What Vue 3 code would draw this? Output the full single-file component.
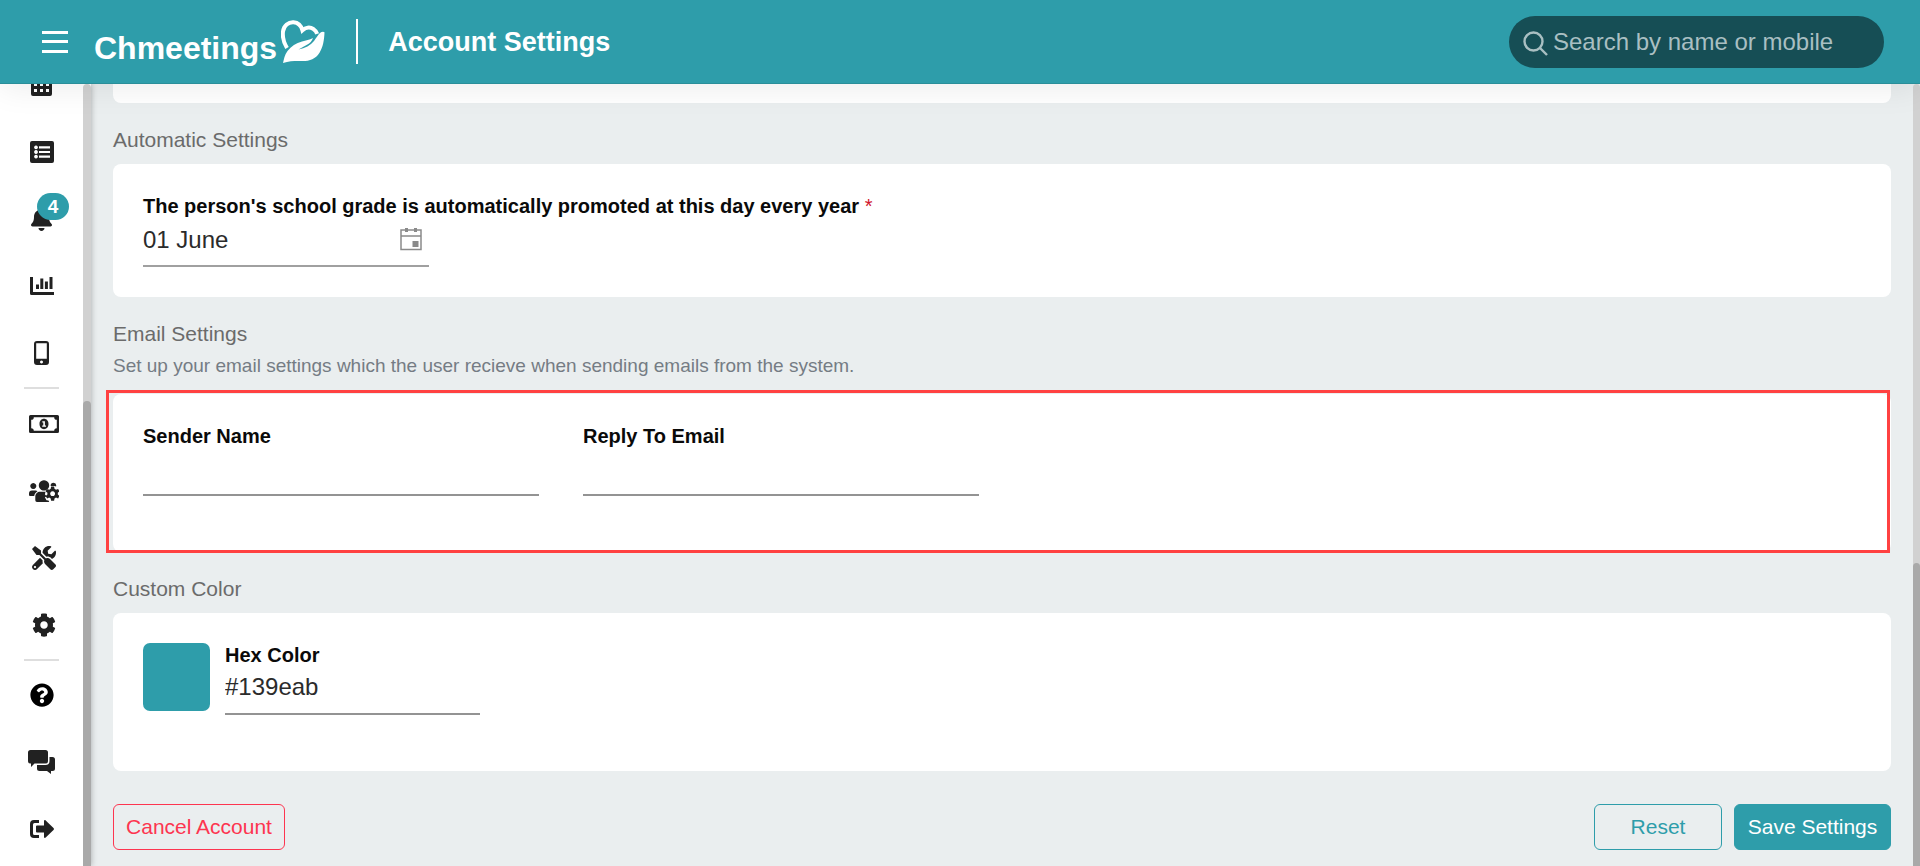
<script setup>
import { ref } from 'vue'

const search = ref('')
const promotionDay = ref('01 June')
const senderName = ref('')
const replyTo = ref('')
const hexColor = ref('#139eab')

const groups = [
  {
    name: 'main',
    items: [
      { label: 'Calendar', w: 21, h: 24, box: '0 0 21 24', d: 'M3 0h15a3 3 0 0 1 3 3v18a2 2 0 0 1-2 2H2a2 2 0 0 1-2-2V3a3 3 0 0 1 3-3zM3 10v3h3v-3zM9 10v3h3v-3zM15 10v3h3v-3zM3 16v3h3v-3zM9 16v3h3v-3zM15 16v3h3v-3z' },
      { label: 'Lists', w: 24, h: 22, box: '0 0 24 22', d: 'M2 0h20a2 2 0 0 1 2 2v18a2 2 0 0 1-2 2H2a2 2 0 0 1-2-2V2a2 2 0 0 1 2-2zM6 4.500a1.900 1.900 0 1 0 .01 0zM6 9.100a1.900 1.900 0 1 0 .01 0zM6 13.700a1.900 1.900 0 1 0 .01 0zM9 5.200v2.200h11V5.200zM9 9.900v2.200h11V9.900zM9 14.600v2.200h11v-2.200z' },
      { label: 'Notifications', badge: 4, w: 21, h: 24, box: '0 0 448 512', d: 'M224 512c35.300 0 63.900-28.600 63.900-64H160.100c0 35.400 28.600 64 63.900 64zm215.400-149.700c-19.300-20.800-55.500-52-55.500-154.300 0-77.700-54.500-139.900-127.900-155.200V32c0-17.700-14.300-32-32-32s-32 14.300-32 32v20.800C118.600 68.100 64.100 130.300 64.100 208c0 102.300-36.200 133.500-55.500 154.300-6 6.400-8.700 14.200-8.600 21.700.1 16.400 13 32 32.100 32h383.800c19.100 0 32-15.600 32.100-32 .1-7.600-2.600-15.300-8.600-21.700z' },
      { label: 'Reports', w: 24, h: 18, box: '0 0 24 18', d: 'M0 0h3v15h21v3H1.500A1.500 1.500 0 0 1 0 16.500zM6 7.500h3V12H6zM10.300 1.500h3V12h-3zM14.900 4.500h3V12h-3zM19.500 0h3v12h-3z' },
      { label: 'Mobile app', w: 15, h: 24, box: '0 0 15 24', d: 'M3 0h9a3 3 0 0 1 3 3v18a3 3 0 0 1-3 3H3a3 3 0 0 1-3-3V3a3 3 0 0 1 3-3zM2.200 2.200v15.600h10.600V2.200zM7.500 19.400a1.500 1.500 0 1 0 .01 0z' },
    ],
  },
  {
    name: 'manage',
    items: [
      { label: 'Contributions', w: 30, h: 18, box: '0 0 30 18', d: 'M1.500 0h27A1.500 1.500 0 0 1 30 1.500v15a1.500 1.500 0 0 1-1.500 1.500h-27A1.500 1.500 0 0 1 0 16.500v-15A1.500 1.500 0 0 1 1.500 0zM4.800 2.200A2.600 2.600 0 0 1 2.200 4.800v8.400a2.600 2.600 0 0 1 2.600 2.600h20.400a2.600 2.600 0 0 1 2.600-2.600V4.800a2.600 2.600 0 0 1-2.600-2.600zM15 3.800c2.600 0 4.500 2.200 4.500 5.200s-1.900 5.200-4.500 5.200-4.500-2.200-4.500-5.200S12.400 3.800 15 3.800zM13.300 6.200v1.300h1v3h-1.100v1.300h3.800v-1.300h-1.100V6.200z' },
      { label: 'User management', w: 30, h: 22, box: '0 0 30 22', d: 'M4.300 3a3 3 0 1 1-.01 0zM15 .2a5.200 5.200 0 1 1-.01 0zM24.500 2.800a3 3 0 0 1 2.600 3.600l-1.600-.4h-3.700l-.2-.4a3 3 0 0 1 2.900-2.800zM3 10.500h3.600c.7 0 1.300.3 1.900.7-1.700 1.100-3 2.600-3.300 4.700H1a1 1 0 0 1-1-1v-1.400a3 3 0 0 1 3-3zM11 11.800h5.500l-.6 2.600 1.500 1.400-1.500 1.500 1.600 3 2 .2.700 1.500H8A1.700 1.700 0 0 1 6.300 20.300v-3.500c0-3 2.200-5 4.700-5zM22.100 6.600h3l.4 2.200 1.500.9 2.100-.8 1.400 2.500-1.700 1.400v1.700l1.700 1.500-1.400 2.400-2.100-.8-1.500.9-.4 2.300h-3l-.4-2.300-1.500-.9-2.100.8-1.400-2.400 1.700-1.500v-1.700l-1.700-1.400 1.400-2.500 2.100.8 1.500-.9zM23.600 11.300a2.400 2.400 0 1 0 .01 0z' },
      { label: 'Tools', w: 24, h: 24, box: '0 0 512 512', d: 'M501.100 395.700L384 278.600c-23.100-23.100-57.600-27.600-85.400-13.900L192 158.100V96L64 0 0 64l96 128h62.100l106.600 106.600c-13.600 27.800-9.200 62.300 13.900 85.400l117.100 117.100c14.600 14.600 38.200 14.600 52.700 0l52.700-52.700c14.500-14.600 14.500-38.200 0-52.700zM331.700 225c28.300 0 54.900 11 74.900 31l19.400 19.400c15.800-6.900 30.800-16.500 43.800-29.500 37.100-37.100 49.700-89.300 37.900-136.700-2.200-9-13.500-12.100-20.100-5.500l-74.400 74.400-67.900-11.300L334 98.900l74.400-74.400c6.600-6.600 3.400-17.900-5.700-20.200-47.400-11.700-99.600.9-136.600 37.900-28.500 28.500-41.900 66.100-41.200 103.600l82.100 82.100c8.100-1.900 16.500-2.900 24.700-2.900zm-103.900 82l-56.700-56.700L18.700 402.800c-25 25-25 65.500 0 90.500s65.500 25 90.500 0l123.600-123.600c-7.600-19.900-9.900-41.600-5-62.700zM64 472c-13.200 0-24-10.800-24-24 0-13.300 10.700-24 24-24s24 10.700 24 24c0 13.200-10.700 24-24 24z' },
      { label: 'Settings', w: 24, h: 24, box: '0 0 512 512', d: 'M487.400 315.700l-42.600-24.600c4.300-23.200 4.300-47 0-70.200l42.600-24.600c4.900-2.800 7.100-8.600 5.500-14-11.100-35.600-30-67.800-54.700-94.600-3.800-4.100-10-5.100-14.800-2.300L380.800 110c-17.900-15.400-38.500-27.300-60.800-35.100V25.800c0-5.600-3.900-10.500-9.400-11.700-36.700-8.200-74.300-7.800-109.200 0-5.500 1.200-9.400 6.100-9.400 11.700V75c-22.200 7.900-42.800 19.800-60.800 35.100L88.700 85.500c-4.900-2.800-11-1.900-14.800 2.300-24.700 26.700-43.600 58.900-54.700 94.600-1.700 5.400.6 11.200 5.500 14L67.300 221c-4.300 23.200-4.300 47 0 70.200l-42.600 24.600c-4.900 2.800-7.100 8.600-5.500 14 11.100 35.600 30 67.800 54.700 94.600 3.800 4.100 10 5.100 14.800 2.300l42.600-24.600c17.900 15.400 38.500 27.300 60.800 35.100v49.200c0 5.600 3.900 10.500 9.400 11.700 36.700 8.200 74.300 7.800 109.200 0 5.500-1.200 9.400-6.100 9.400-11.700v-49.200c22.200-7.900 42.800-19.800 60.800-35.100l42.600 24.600c4.900 2.800 11 1.900 14.800-2.300 24.700-26.700 43.600-58.900 54.700-94.600 1.500-5.500-.7-11.300-5.600-14.100zM256 336c-44.100 0-80-35.900-80-80s35.900-80 80-80 80 35.900 80 80-35.900 80-80 80z' },
    ],
  },
  {
    name: 'support',
    items: [
      { label: 'Help', dark: true, w: 24, h: 24, box: '0 0 512 512', d: 'M504 256c0 137-111 248-248 248S8 393 8 256C8 119.100 119 8 256 8s248 111.100 248 248zM262.700 90c-54.500 0-89.300 23-116.500 63.800-3.500 5.300-2.400 12.400 2.700 16.300l34.700 26.300c5.200 3.900 12.600 3 16.700-2.100 17.900-22.700 30.100-35.800 57.300-35.800 20.400 0 45.700 13.100 45.700 33 0 15-12.400 22.700-32.500 34C247.100 238.500 216 254.900 216 296v4c0 6.600 5.400 12 12 12h56c6.600 0 12-5.400 12-12v-1.300c0-28.500 83.200-29.600 83.200-106.700 0-58-60.200-102-116.500-102zM256 338c-25.400 0-46 20.600-46 46 0 25.400 20.600 46 46 46s46-20.600 46-46c0-25.400-20.600-46-46-46z' },
      { label: 'Chat', w: 27, h: 24, box: '0 0 27 24', d: 'M2.500 0h15A2.500 2.500 0 0 1 20 2.500v8.500a2.500 2.500 0 0 1-2.500 2.500H6.500L3 17v-3.500h-.5A2.500 2.500 0 0 1 0 11V2.500A2.500 2.500 0 0 1 2.500 0zM21.500 7h3A2.500 2.500 0 0 1 27 9.500v9a2.500 2.500 0 0 1-2.500 2.500H23v3l-4-3h-7.500A2.500 2.500 0 0 1 9 18.500V15h8.500a4 4 0 0 0 4-4z' },
      { label: 'Sign out', w: 24, h: 18, box: '0 0 24 18', d: 'M9 0v3H4.500A1.500 1.500 0 0 0 3 4.500v9A1.500 1.500 0 0 0 4.500 15H9v3H4a4 4 0 0 1-4-4V4a4 4 0 0 1 4-4zM14 1c0-1 1-1.300 1.700-.6l7.800 7.700c.6.600.6 1.200 0 1.800l-7.800 7.700c-.7.700-1.700.4-1.700-.6v-4.500H7a1 1 0 0 1-1-1v-5a1 1 0 0 1 1-1h7z' },
    ],
  },
]
</script>

<template>
  <div class="app">
    <header class="topbar">
      <button class="menu" type="button" aria-label="Menu">
        <span></span><span></span><span></span>
      </button>
      <a class="logo" href="#" aria-label="Chmeetings">
        <span class="wordmark">Chmeetings</span>
        <svg width="44" height="43" viewBox="0 0 44 43" aria-hidden="true">
          <path d="M6 28C3 23 1.300 17 2 11.500 2.800 5.500 7.500 2 12.500 2.300c4.500.4 7.700 3.600 8.900 8 3.200-3 7.500-3.700 10.800-1.400 2 1.400 3.300 3 4 5" fill="none" stroke="#fff" stroke-width="4" />
          <path d="M43.500 12.300c-.3 8-1.500 15-5 20.500-4 6.200-9.500 8.300-17 8.300-7 0-12.500-.3-19.500 1.900 1-4 1.500-8 4.500-12 3.800-5 8.500-8.200 14.500-9.600 4-1 7.500-1.400 11-3.400-1 3-3 5.200-6 6.700l-8.500 4.800c6.500-1.200 12-4 15.500-8.500 2.500-3.300 4-6 6-7.900 1.500-1.400 3.500-1.800 4.500-.8z" fill="#fff" />
        </svg>
      </a>
      <h1>Account Settings</h1>
      <label class="search">
        <svg width="25" height="25" viewBox="0 0 25 25" aria-hidden="true">
          <g fill="none" stroke="currentColor" stroke-width="2.400"><circle cx="10.500" cy="10.500" r="9" /><path d="M17 17l7 7" /></g>
        </svg>
        <input v-model="search" type="search" placeholder="Search by name or mobile" aria-label="Search by name or mobile" />
      </label>
    </header>

    <div class="body">
      <aside class="sidebar">
        <nav aria-label="Main">
          <div v-for="group in groups" :key="group.name" class="group" :class="group.name">
            <a v-for="item in group.items" :key="item.label" href="#" :aria-label="item.label" :class="{ dark: item.dark }">
              <svg :width="item.w" :height="item.h" :viewBox="item.box" aria-hidden="true">
                <path :d="item.d" fill="currentColor" fill-rule="evenodd" />
              </svg>
              <span v-if="item.badge" class="badge">{{ item.badge }}</span>
            </a>
          </div>
        </nav>
        <div class="track" aria-hidden="true"><div class="thumb side"></div></div>
      </aside>

      <main>
        <div class="card tail"></div>

        <section>
          <h2>Automatic Settings</h2>
          <div class="card">
            <div class="field date">
              <label for="day">The person's school grade is automatically promoted at this day every year <span class="required">*</span></label>
              <div class="picker">
                <input id="day" v-model="promotionDay" type="text" />
                <button type="button" aria-label="Open calendar">
                  <svg width="22" height="24" viewBox="0 0 22 24" aria-hidden="true">
                    <path d="M1 3h20v19.500H1zM1 9h20" fill="none" stroke="#8a8a8a" stroke-width="1.500" />
                    <path d="M5 1h3v4H5zM14 1h3v4h-3zM12.500 14h6v6h-6z" fill="#8a8a8a" />
                  </svg>
                </button>
              </div>
            </div>
          </div>
        </section>

        <section>
          <h2 class="with-note">Email Settings</h2>
          <p>Set up your email settings which the user recieve when sending emails from the system.</p>
          <div class="card tall highlighted">
            <div class="field">
              <label for="sender">Sender Name</label>
              <input id="sender" v-model="senderName" type="text" />
            </div>
            <div class="field">
              <label for="reply">Reply To Email</label>
              <input id="reply" v-model="replyTo" type="email" />
            </div>
          </div>
        </section>

        <section>
          <h2>Custom Color</h2>
          <div class="card tall color">
            <button class="swatch" type="button" aria-label="Pick a color"></button>
            <div class="field hex">
              <label for="hex">Hex Color</label>
              <input id="hex" v-model="hexColor" type="text" />
            </div>
          </div>
        </section>

        <footer>
          <button class="btn danger" type="button">Cancel Account</button>
          <button class="btn outline" type="button">Reset</button>
          <button class="btn primary" type="button">Save Settings</button>
        </footer>
      </main>
      <div class="track page" aria-hidden="true"><div class="thumb main-thumb"></div></div>
    </div>
  </div>
</template>

<style>
body {
  margin: 0;
  background: #eaeeef;
}
</style>

<style scoped>
.app {
  display: flex;
  flex-direction: column;
  height: 100vh;
  overflow: hidden;
  background: #eaeeef;
  font-family: "Liberation Sans", Arial, sans-serif;
  color: #212121;
}
.app *,
.app {
  box-sizing: border-box;
}
button,
input {
  font-family: inherit;
  margin: 0;
  padding: 0;
  border: 0;
  background: none;
  outline: none;
}
button {
  cursor: pointer;
}
svg {
  display: block;
  flex: none;
}

.topbar {
  position: relative;
  z-index: 2;
  flex: none;
  display: flex;
  align-items: center;
  height: 84px;
  padding: 0 36px 0 42px;
  background: #2e9daa;
  border-bottom: 1px solid #2a8e99;
  box-shadow: 0 4px 32px rgba(0, 0, 0, 0.08);
}
.menu {
  display: flex;
  flex-direction: column;
  justify-content: space-between;
  width: 26px;
  height: 22px;
}
.menu span {
  height: 3px;
  background: #fff;
}
.logo {
  display: flex;
  align-items: center;
  gap: 4px;
  margin-left: 26px;
  color: #fff;
  text-decoration: none;
}
.wordmark {
  font-size: 32px;
  font-weight: 700;
  line-height: 36px;
  padding-top: 12px;
}
h1 {
  margin: 0 0 0 31px;
  padding: 1px 0 0 30px;
  border-left: 2px solid #fff;
  font-size: 27px;
  line-height: 44px;
  font-weight: 700;
  color: #fff;
}
.search {
  display: flex;
  align-items: center;
  gap: 5px;
  width: 375px;
  height: 52px;
  margin-left: auto;
  padding: 0 16px 0 14px;
  border-radius: 26px;
  background: #164e55;
  color: #a9bfc2;
}
.search svg {
  margin-top: 4px;
}
.search input {
  flex: 1;
  min-width: 0;
  height: 52px;
  font-size: 24px;
  color: #fff;
}
.search input::placeholder {
  color: #a9bfc2;
  opacity: 1;
}

.body {
  flex: 1;
  min-height: 0;
  display: flex;
}
.sidebar {
  position: relative;
  z-index: 1;
  flex: none;
  display: flex;
  width: 91px;
  overflow: hidden;
  background: #fff;
  box-shadow: 0 0 6px rgba(0, 0, 0, 0.3);
}
nav {
  flex: 1;
  margin-top: -33px;
}
.group a {
  position: relative;
  display: flex;
  align-items: center;
  justify-content: center;
  height: 67px;
  color: #212121;
}
.group a.dark {
  color: #000;
}
.group.manage a {
  padding-left: 4px;
}
.group + .group::before {
  content: "";
  display: block;
  width: 35px;
  height: 2px;
  margin: 1px 24px;
  background: #dedede;
}
.group.support::before {
  margin-bottom: 0;
}
.badge {
  position: absolute;
  top: 8px;
  left: 37px;
  width: 32px;
  height: 27px;
  border-radius: 14px;
  background: #2e9daa;
  color: #fff;
  font-size: 19px;
  font-weight: 700;
  line-height: 27px;
  text-align: center;
}
.track {
  flex: none;
  display: flex;
  flex-direction: column;
  justify-content: flex-end;
  width: 8px;
  border-radius: 4px 4px 0 0;
  background: #d1d1d1;
}
.track.page {
  width: 7px;
}
.thumb {
  border-radius: 4px 4px 0 0;
  background: #a9a9a9;
}
.thumb.side {
  height: 59.5%;
}
.thumb.main-thumb {
  height: 38.8%;
}

main {
  flex: 1;
  min-width: 0;
  padding: 0 22px;
}
.card {
  position: relative;
  display: flex;
  gap: 44px;
  padding: 30px;
  border-radius: 8px;
  background: #fff;
}
.card.tail {
  padding: 19px 0 0;
  border-radius: 0 0 8px 8px;
}
.card.tall {
  padding-bottom: 56px;
}
.card.color {
  gap: 15px;
}
.card.highlighted::after {
  content: "";
  position: absolute;
  inset: -4px 1px -1px -7px;
  border: 3px solid #ff4141;
  pointer-events: none;
}
h2 {
  margin: 0;
  padding: 25px 0 12px;
  font-size: 21px;
  line-height: 24px;
  font-weight: 400;
  color: #6b6b6b;
}
h2.with-note {
  padding-bottom: 8px;
}
p {
  margin: 0 0 16px;
  font-size: 19px;
  line-height: 24px;
  color: #757c84;
}
.field {
  width: 396px;
}
.field.date {
  width: 100%;
}
.field.hex {
  width: 255px;
}
.field label {
  display: block;
  font-size: 20px;
  line-height: 24px;
  font-weight: 700;
  color: #0a0a0a;
}
.required {
  font-weight: 400;
  color: #d0142c;
}
.field input {
  display: block;
  width: 100%;
  height: 48px;
  padding-bottom: 6px;
  border-bottom: 2px solid #939393;
  font-size: 24px;
  color: #2b2b2b;
}
.picker {
  display: flex;
  align-items: flex-start;
  width: 286px;
  border-bottom: 2px solid #a0a0a0;
}
.picker input {
  flex: 1;
  min-width: 0;
  height: 47px;
  padding-bottom: 3px;
  border: 0;
}
.picker button {
  padding: 9px 7px 0 0;
}
.swatch {
  width: 67px;
  height: 68px;
  border-radius: 7px;
  background: #2e9daa;
}
footer {
  display: flex;
  gap: 12px;
  padding-top: 33px;
}
.btn {
  height: 46px;
  padding: 0 12px;
  border: 1px solid #2e9daa;
  border-radius: 6px;
  font-size: 21px;
}
.btn.danger {
  min-width: 172px;
  margin-right: auto;
  border-color: #fd3550;
  color: #fd3550;
}
.btn.outline {
  min-width: 128px;
  color: #2e9daa;
}
.btn.primary {
  min-width: 157px;
  background: #2e9daa;
  color: #fff;
}
</style>
